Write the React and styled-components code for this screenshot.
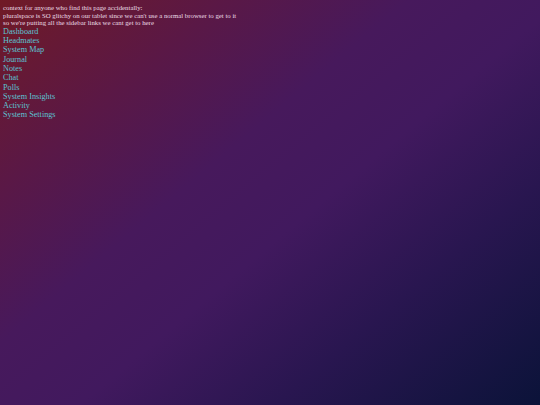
import React from 'react';
import styled, { createGlobalStyle } from 'styled-components';

const GlobalStyle = createGlobalStyle`
  html, body {
    margin: 0;
    min-height: 100%;
  }
  body {
    min-height: 405px;
    padding: 4px 3px 3px;
    box-sizing: border-box;
    font-family: "Liberation Serif", "Times New Roman", serif;
    background: linear-gradient(
      140deg,
      #701a26 0%,
      #5a1846 22%,
      #47195c 40%,
      #41195e 55%,
      #291650 74%,
      #0b1339 100%
    );
    background-attachment: fixed;
  }
`;

const Note = styled.p`
  margin: 0;
  font-size: 6.8px;
  line-height: 7.6px;
  color: #ecdde6;
`;

const LinkList = styled.nav`
  display: flex;
  flex-direction: column;
`;

const SideLink = styled.a`
  font-size: 8.2px;
  line-height: 9.3px;
  color: #5cc3d3;
  text-decoration: none;
`;

const links = [
  'Dashboard',
  'Headmates',
  'System Map',
  'Journal',
  'Notes',
  'Chat',
  'Polls',
  'System Insights',
  'Activity',
  'System Settings',
];

const App = () => {
  return (
    <>
      <GlobalStyle />
      <Note>context for anyone who find this page accidentally:</Note>
      <Note>pluralspace is SO glitchy on our tablet since we can't use a normal browser to get to it</Note>
      <Note>so we're putting all the sidebar links we cant get to here</Note>
      <LinkList>
        {links.map((l) => (
          <SideLink key={l} href="#">
            {l}
          </SideLink>
        ))}
      </LinkList>
    </>
  );
};

export default App;
